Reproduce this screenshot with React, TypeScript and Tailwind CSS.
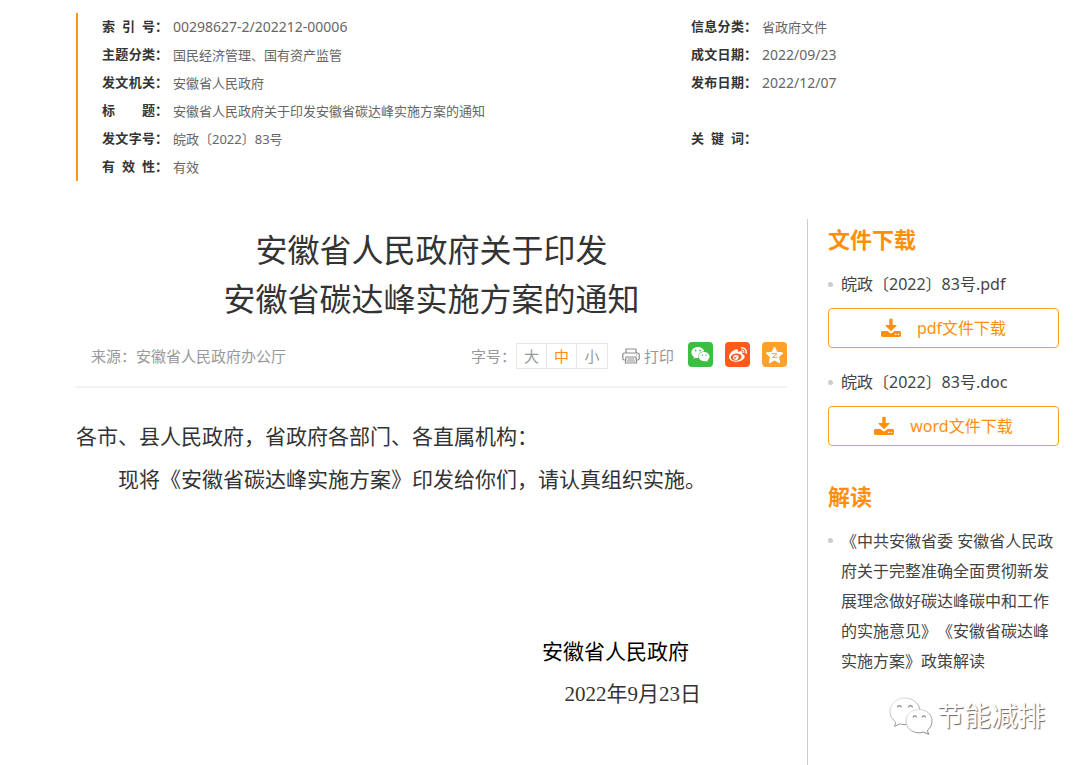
import React, { useState } from 'react';
import { FaWeibo, FaWeixin } from 'react-icons/fa';

interface MetaItem {
  label: string;
  value: string;
  latin?: boolean;
}

const leftMeta: MetaItem[] = [
  { label: '索 引 号', value: '00298627-2/202212-00006', latin: true },
  { label: '主题分类', value: '国民经济管理、国有资产监管' },
  { label: '发文机关', value: '安徽省人民政府' },
  { label: '标 题', value: '安徽省人民政府关于印发安徽省碳达峰实施方案的通知' },
  { label: '发文字号', value: '皖政〔2022〕83号' },
  { label: '有 效 性', value: '有效' },
];

const rightMeta: MetaItem[] = [
  { label: '信息分类', value: '省政府文件' },
  { label: '成文日期', value: '2022/09/23', latin: true },
  { label: '发布日期', value: '2022/12/07', latin: true },
  { label: '', value: '' },
  { label: '关 键 词', value: '' },
];

const MetaList: React.FC<{ items: MetaItem[] }> = ({ items }) => (
  <dl>
    {items.map((item, i) => (
      <div key={i} className="flex h-7 items-center">
        {item.label && (
          <>
            <dt className="flex w-[71px] shrink-0 text-[13px] font-bold text-[#333]">
              <span className="w-[53px] whitespace-nowrap [text-align-last:justify]">{item.label}</span>：
            </dt>
            <dd className={item.latin ? 'text-[14px] leading-5 text-[#666]' : 'text-[13px] leading-5 text-[#666]'}>
              {item.value}
            </dd>
          </>
        )}
      </div>
    ))}
  </dl>
);

const PrinterIcon = () => (
  <svg width="18" height="16" viewBox="0 0 18 16" fill="none" stroke="#8c8c8c" strokeWidth="1.2" strokeLinejoin="round">
    <path d="M4 5V1h10v4" />
    <path d="M4 12H2.2A1.4 1.4 0 0 1 .8 10.600V6.400A1.400 1.400 0 0 1 2.200 5h13.600a1.400 1.400 0 0 1 1.400 1.400v4.200a1.400 1.400 0 0 1-1.400 1.400H14" />
    <path d="M4 9h10l.6 6H3.400z" />
    <path d="M5.500 11h7M5 13h8M14 7h1.200" />
  </svg>
);

const QzoneIcon = () => (
  <svg width="19" height="18" viewBox="0 0 19 18">
    <path
      d="M9.500 1l2.500 5.300 5.900.7-4.300 4 1.100 5.800-5.200-2.800-5.200 2.800 1.100-5.800-4.300-4 5.900-.7z"
      fill="#fff"
      stroke="#fff"
      strokeLinejoin="round"
    />
    <path d="M6.800 7.600c1.800-.3 3.600-.3 5.200 0L7.600 11.200c1.700.3 3.400.3 5 .1" fill="none" stroke="#ff9f2e" strokeWidth="1" />
  </svg>
);

const DownloadIcon = () => (
  <svg width="20" height="20" viewBox="0 0 20 20" fill="#ff8f0b">
    <path d="M8.300 1.500a.7.7 0 0 1 .7-.7h2a.7.7 0 0 1 .7.7V7h3.100c.6 0 .9.6.5 1l-4.800 4.700a.7.7 0 0 1-1 0L4.700 8c-.4-.4-.1-1 .5-1h3.100z" />
    <path
      fillRule="evenodd"
      d="M1.500 13h5.200l1.800 1.700c.8.8 2.200.8 3 0l1.800-1.700h5.200c.8 0 1.500.6 1.500 1.400v3.200c0 .8-.7 1.400-1.500 1.400h-17C.7 19 0 18.400 0 17.600v-3.200C0 13.600.7 13 1.500 13zM14 15.700v1.300h1.400v-1.300zm2.800 0v1.300h1.400v-1.300z"
    />
  </svg>
);

const WatermarkLogo = () => (
  <svg width="44" height="38" viewBox="0 0 44 38" fill="#fff" strokeWidth="1" strokeLinejoin="round">
    <defs>
      <linearGradient id="edge" x1="0" y1="0" x2="0.600" y2="1">
        <stop offset="0" stopColor="#eeeeee" />
        <stop offset="1" stopColor="#858585" />
      </linearGradient>
    </defs>
    <path
      stroke="url(#edge)"
      d="M16 1C7.500 1 1 7 1 14.500c0 4.500 2.200 8 5.800 10.700L5.500 29.500l5.200-2.600c1.700.5 3.400.7 5.300.7 8.500 0 15-5.800 15-13.100S24.500 1 16 1z"
    />
    <path
      stroke="url(#edge)"
      d="M30 12.500c-7.400 0-13 5-13 11.500s5.600 11.800 13 11.800c1.600 0 3.200-.3 4.600-.7l5 2.300-1.200-4.100c2.900-2.200 4.600-5.500 4.600-9.300 0-6.500-5.600-11.500-13-11.500z"
    />
    <path
      fill="none"
      stroke="#858585"
      strokeWidth="1.200"
      d="M8.500 10.500c.3-2.400 3.500-2.400 4 0M19.500 10.500c.3-2.400 3.500-2.400 4 0M24 20.500c.3-2.200 3.200-2.200 3.600 0M33 20.500c.3-2.200 3.200-2.200 3.600 0"
    />
  </svg>
);

const Download: React.FC<{ name: string; text: string }> = ({ name, text }) => (
  <div className="mb-[19px]">
    <p className="flex h-[30px] items-center gap-2 text-[#444]">
      <span className="size-[5px] rounded-full bg-[#ccc]" />
      {name}
    </p>
    <a
      href="#"
      className="mt-[9px] flex h-10 items-center justify-center gap-4 rounded border border-[#ff9d28] text-[#ff8f0b]"
    >
      <DownloadIcon />
      {text}
    </a>
  </div>
);

const sizes = ['大', '中', '小'];

export default function App() {
  const [size, setSize] = useState('中');

  return (
    <div
      lang="zh-CN"
      className="flex min-h-screen flex-col bg-white pl-[76px] pr-[21px] pt-[13px] font-['Noto_Sans','Noto_Sans_CJK_SC',sans-serif] [text-spacing-trim:space-all]"
    >
      <header className="grid grid-cols-[8fr_5fr] border-l-2 border-[#ff9712] pl-6">
        <MetaList items={leftMeta} />
        <MetaList items={rightMeta} />
      </header>

      <div className="mt-[38px] flex grow">
        <main className="min-w-0 grow pt-1.5">
          <h1 className="text-center text-[32px] leading-[49px] text-[#333]">
            安徽省人民政府关于印发
            <br />
            安徽省碳达峰实施方案的通知
          </h1>

          <div className="flex h-[65px] items-center justify-between border-b-2 border-[#f1f1f1] pl-[15px] pt-[3px] text-[15px] text-[#999]">
            <span>来源：安徽省人民政府办公厅</span>
            <div className="flex items-center gap-3.5">
              <div className="flex items-center">
                <span>字号：</span>
                <div className="flex h-[26px] divide-x divide-[#e6e6e6] border border-[#e6e6e6]">
                  {sizes.map((s) => (
                    <button
                      key={s}
                      type="button"
                      onClick={() => setSize(s)}
                      className={s === size ? 'w-[30px] leading-6 text-[#ff8f0b]' : 'w-[30px] leading-6'}
                    >
                      {s}
                    </button>
                  ))}
                </div>
              </div>
              <button type="button" className="flex items-center gap-1">
                <PrinterIcon />
                打印
              </button>
              <div className="flex gap-3 pb-[3px]">
                <a href="#" aria-label="微信" className="flex size-[25px] items-center justify-center rounded bg-[#3abf40] text-white">
                  <FaWeixin size={19} />
                </a>
                <a href="#" aria-label="微博" className="flex size-[25px] items-center justify-center rounded bg-[#ff5a1a] text-white">
                  <FaWeibo size={18} />
                </a>
                <a href="#" aria-label="QQ空间" className="flex size-[25px] items-center justify-center rounded bg-[#ff9f2e]">
                  <QzoneIcon />
                </a>
              </div>
            </div>
          </div>

          <article className="mt-[27px] text-[21px] leading-[43px] text-[#333]">
            <p>各市、县人民政府，省政府各部门、各直属机构：</p>
            <p className="indent-[2em]">现将《安徽省碳达峰实施方案》印发给你们，请认真组织实施。</p>
            <p className="mt-[129px] pr-[98px] text-right text-black">安徽省人民政府</p>
            <p className="pr-[86px] text-right font-['Liberation_Serif','Noto_Sans_CJK_SC',serif]">2022年9月23日</p>
          </article>
        </main>

        <aside className="ml-5 w-[252px] shrink-0 border-l border-[#ccc] pl-5 pt-0.5">
          <h2 className="mb-3 text-[22px] font-bold leading-9 text-[#ff8f0b]">文件下载</h2>
          <Download name="皖政〔2022〕83号.pdf" text="pdf文件下载" />
          <Download name="皖政〔2022〕83号.doc" text="word文件下载" />
          <h2 className="mb-3 mt-8 text-[22px] font-bold leading-9 text-[#ff8f0b]">解读</h2>
          <div className="flex gap-2 leading-[30px] text-[#444]">
            <span className="mt-3 size-[5px] shrink-0 rounded-full bg-[#ccc]" />
            <a href="#">
              《中共安徽省委 安徽省人民政府关于完整准确全面贯彻新发展理念做好碳达峰碳中和工作的实施意见》《安徽省碳达峰实施方案》政策解读
            </a>
          </div>
          <div className="mt-5 flex items-center justify-end gap-1 pr-3.5">
            <WatermarkLogo />
            <span className="text-[27px] leading-10 text-white [text-shadow:1px_1px_1px_#666]">节能减排</span>
          </div>
        </aside>
      </div>
    </div>
  );
}
